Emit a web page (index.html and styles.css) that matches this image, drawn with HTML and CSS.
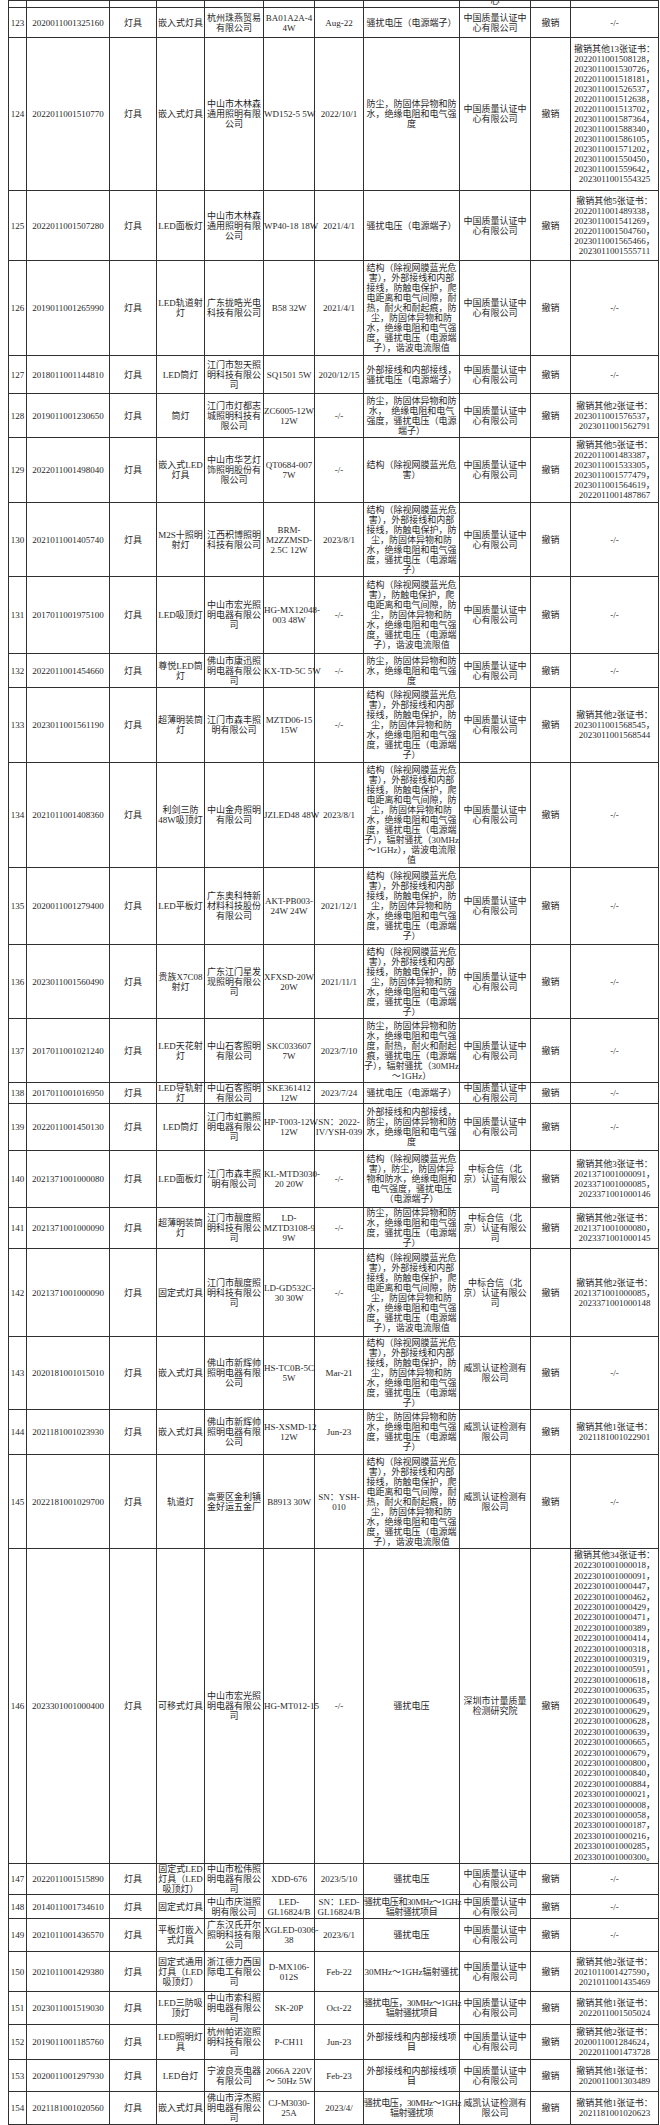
FILE: index.html
```
<!DOCTYPE html>
<html lang="zh">
<head>
<meta charset="utf-8">
<title>撤销证书列表</title>
<link rel="stylesheet" href="styles.css">
</head>
<body>
<table class="grid">
<colgroup>
<col class="c-no"><col class="c-cert"><col class="c-cat"><col class="c-prod"><col class="c-co"><col class="c-model"><col class="c-date"><col class="c-reason"><col class="c-body"><col class="c-act"><col class="c-note">
</colgroup>
<tbody>
<tr class="h7"><td></td><td></td><td></td><td></td><td></td><td></td><td></td><td></td><td><div class="cut"><span>心</span></div></td><td></td><td></td></tr>

<tr class="h30"><td>123</td><td>2020011001325160</td><td>灯具</td><td>嵌入式灯具</td><td>杭州珠燕贸易<br>有限公司</td><td>BA01A2A-4<br>4W</td><td>Aug-22</td><td>骚扰电压（电源端子）</td><td>中国质量认证中<br>心有限公司</td><td>撤销</td><td>-/-</td></tr>

<tr class="h153"><td>124</td><td>2022011001510770</td><td>灯具</td><td>嵌入式灯具</td><td>中山市木林森<br>通用照明有限<br>公司</td><td>WD152-5 5W</td><td>2022/10/1</td><td>防尘，防固体异物和防<br>水，绝缘电阻和电气强<br>度</td><td>中国质量认证中<br>心有限公司</td><td>撤销</td><td>撤销其他13张证书：<br>2022011001508128，<br>2023011001530726，<br>2022011001518181，<br>2023011001526537，<br>2022011001512638，<br>2022011001513702，<br>2023011001587364，<br>2023011001588340，<br>2023011001586105，<br>2023011001571202，<br>2023011001550450，<br>2023011001559642，<br>2023011001554325</td></tr>

<tr class="h70"><td>125</td><td>2022011001507280</td><td>灯具</td><td>LED面板灯</td><td>中山市木林森<br>通用照明有限<br>公司</td><td>WP40-18 18W</td><td>2021/4/1</td><td>骚扰电压（电源端子）</td><td>中国质量认证中<br>心有限公司</td><td>撤销</td><td>撤销其他5张证书：<br>2022011001489338，<br>2023011001541269，<br>2022011001504760，<br>2023011001565466，<br>2023011001555711</td></tr>

<tr class="h95"><td>126</td><td>2019011001265990</td><td>灯具</td><td>LED轨道射<br>灯</td><td>广东拢晧光电<br>科技有限公司</td><td>B58 32W</td><td>2021/4/1</td><td>结构（除视网膜蓝光危<br>害），外部接线和内部<br>接线，防触电保护，爬<br>电距离和电气间隙，耐<br>热，耐火和耐起痕，防<br>尘，防固体异物和防<br>水，绝缘电阻和电气强<br>度，骚扰电压（电源端<br>子），谐波电流限值</td><td>中国质量认证中<br>心有限公司</td><td>撤销</td><td>-/-</td></tr>

<tr class="h38"><td>127</td><td>2018011001144810</td><td>灯具</td><td>LED筒灯</td><td>江门市恕天照<br>明科技有限公<br>司</td><td>SQ1501 5W</td><td>2020/12/15</td><td>外部接线和内部接线，<br>骚扰电压（电源端子）</td><td>中国质量认证中<br>心有限公司</td><td>撤销</td><td>-/-</td></tr>

<tr class="h44"><td>128</td><td>2019011001230650</td><td>灯具</td><td>筒灯</td><td>江门市灯都志<br>城照明科技有<br>限公司</td><td>ZC6005-12W<br>12W</td><td>-/-</td><td>防尘，防固体异物和防<br>水，　绝缘电阻和电气<br>强度，骚扰电压（电源<br>端子）</td><td>中国质量认证中<br>心有限公司</td><td>撤销</td><td>撤销其他2张证书：<br>2023011001576537，<br>2023011001562791</td></tr>

<tr class="h65"><td>129</td><td>2022011001498040</td><td>灯具</td><td>嵌入式LED<br>灯具</td><td>中山市华艺灯<br>饰照明股份有<br>限公司</td><td>QT0684-007<br>7W</td><td>-/-</td><td>结构（除视网膜蓝光危<br>害）</td><td>中国质量认证中<br>心有限公司</td><td>撤销</td><td>撤销其他5张证书：<br>2022011001483387，<br>2023011001533305，<br>2023011001577479，<br>2023011001564619，<br>2022011001487867</td></tr>

<tr class="h74"><td>130</td><td>2021011001405740</td><td>灯具</td><td>M2S十照明<br>射灯</td><td>江西积博照明<br>科技有限公司</td><td>BRM-<br>M2ZZMSD-<br>2.5C 12W</td><td>2023/8/1</td><td>结构（除视网膜蓝光危<br>害），外部接线和内部<br>接线，防触电保护，防<br>尘，防固体异物和防<br>水，绝缘电阻和电气强<br>度，骚扰电压（电源端<br>子）</td><td>中国质量认证中<br>心有限公司</td><td>撤销</td><td>-/-</td></tr>

<tr class="h77"><td>131</td><td>2017011001975100</td><td>灯具</td><td>LED吸顶灯</td><td>中山市宏光照<br>明电器有限公<br>司</td><td>HG-MX12048-<br>003 48W</td><td>-/-</td><td>结构（除视网膜蓝光危<br>害），防触电保护，爬<br>电距离和电气间隙，防<br>尘，防固体异物和防<br>水，绝缘电阻和电气强<br>度，骚扰电压（电源端<br>子），谐波电流限值</td><td>中国质量认证中<br>心有限公司</td><td>撤销</td><td>-/-</td></tr>

<tr class="h34"><td>132</td><td>2022011001454660</td><td>灯具</td><td>尊悦LED筒<br>灯</td><td>佛山市康迅照<br>明电器有限公<br>司</td><td>KX-TD-5C 5W</td><td>-/-</td><td>防尘，防固体异物和防<br>水，绝缘电阻和电气强<br>度</td><td>中国质量认证中<br>心有限公司</td><td>撤销</td><td>-/-</td></tr>

<tr class="h75"><td>133</td><td>2023011001561190</td><td>灯具</td><td>超薄明装筒<br>灯</td><td>江门市森丰照<br>明有限公司</td><td>MZTD06-15<br>15W</td><td>-/-</td><td>结构（除视网膜蓝光危<br>害），外部接线和内部<br>接线，防触电保护，防<br>尘，防固体异物和防<br>水，绝缘电阻和电气强<br>度，骚扰电压（电源端<br>子）</td><td>中国质量认证中<br>心有限公司</td><td>撤销</td><td>撤销其他2张证书：<br>2023011001568545，<br>2023011001568544</td></tr>

<tr class="h105"><td>134</td><td>2021011001408360</td><td>灯具</td><td>利剑三防<br>48W吸顶灯</td><td>中山金舟照明<br>有限公司</td><td>JZLED48 48W</td><td>2023/8/1</td><td>结构（除视网膜蓝光危<br>害），外部接线和内部<br>接线，防触电保护，爬<br>电距离和电气间隙，防<br>尘，防固体异物和防<br>水，绝缘电阻和电气强<br>度，骚扰电压（电源端<br>子），辐射骚扰（30MHz<br>～1GHz），谐波电流限<br>值</td><td>中国质量认证中<br>心有限公司</td><td>撤销</td><td>-/-</td></tr>

<tr class="h77"><td>135</td><td>2020011001279400</td><td>灯具</td><td>LED平板灯</td><td>广东奥科特新<br>材料科技股份<br>有限公司</td><td>AKT-PB003-<br>24W 24W</td><td>2021/12/1</td><td>结构（除视网膜蓝光危<br>害），外部接线和内部<br>接线，防触电保护，防<br>尘，防固体异物和防<br>水，绝缘电阻和电气强<br>度，骚扰电压（电源端<br>子）</td><td>中国质量认证中<br>心有限公司</td><td>撤销</td><td>-/-</td></tr>

<tr class="h74"><td>136</td><td>2023011001560490</td><td>灯具</td><td>贵族X7C08<br>射灯</td><td>广东江门星发<br>现照明有限公<br>司</td><td>XFXSD-20W<br>20W</td><td>2021/11/1</td><td>结构（除视网膜蓝光危<br>害），外部接线和内部<br>接线，防触电保护，防<br>尘，防固体异物和防<br>水，绝缘电阻和电气强<br>度，骚扰电压（电源端<br>子）</td><td>中国质量认证中<br>心有限公司</td><td>撤销</td><td>-/-</td></tr>

<tr class="h64"><td>137</td><td>2017011001021240</td><td>灯具</td><td>LED天花射<br>灯</td><td>中山石客照明<br>有限公司</td><td>SKC033607<br>7W</td><td>2023/7/10</td><td>防尘，防固体异物和防<br>水，绝缘电阻和电气强<br>度，耐热，耐火和耐起<br>痕，骚扰电压（电源端<br>子），辐射骚扰（30MHz<br>～1GHz）</td><td>中国质量认证中<br>心有限公司</td><td>撤销</td><td>-/-</td></tr>

<tr class="h21"><td>138</td><td>2017011001016950</td><td>灯具</td><td>LED导轨射<br>灯</td><td>中山石客照明<br>有限公司</td><td>SKE361412<br>12W</td><td>2023/7/24</td><td>骚扰电压（电源端子）</td><td>中国质量认证中<br>心有限公司</td><td>撤销</td><td>-/-</td></tr>

<tr class="h47"><td>139</td><td>2022011001450130</td><td>灯具</td><td>LED筒灯</td><td>江门市虹鹏照<br>明电器有限公<br>司</td><td>HP-T003-12W<br>12W</td><td>SN：2022-<br>IV/YSH-039</td><td>外部接线和内部接线，<br>防尘，防固体异物和防<br>水，绝缘电阻和电气强<br>度</td><td>中国质量认证中<br>心有限公司</td><td>撤销</td><td>-/-</td></tr>

<tr class="h57"><td>140</td><td>2021371001000080</td><td>灯具</td><td>LED面板灯</td><td>江门市森丰照<br>明有限公司</td><td>KL-MTD3030-<br>20 20W</td><td>-/-</td><td>结构（除视网膜蓝光危<br>害），防尘，防固体异<br>物和防水，绝缘电阻和<br>电气强度，骚扰电压<br>（电源端子）</td><td>中标合信（北<br>京）认证有限公<br>司</td><td>撤销</td><td>撤销其他3张证书：<br>2021371001000091，<br>2023371001000085，<br>2023371001000146</td></tr>

<tr class="h40"><td>141</td><td>2021371001000090</td><td>灯具</td><td>超薄明装筒<br>灯</td><td>江门市靓度照<br>明科技有限公<br>司</td><td>LD-<br>MZTD3108-9<br>9W</td><td>-/-</td><td>防尘，防固体异物和防<br>水，绝缘电阻和电气强<br>度，骚扰电压（电源端<br>子）</td><td>中标合信（北<br>京）认证有限公<br>司</td><td>撤销</td><td>撤销其他2张证书：<br>2021371001000080，<br>2023371001000145</td></tr>

<tr class="h88"><td>142</td><td>2021371001000090</td><td>灯具</td><td>固定式灯具</td><td>江门市靓度照<br>明科技有限公<br>司</td><td>LD-GD532C-<br>30 30W</td><td>-/-</td><td>结构（除视网膜蓝光危<br>害），外部接线和内部<br>接线，防触电保护，爬<br>电距离和电气间隙，防<br>尘，防固体异物和防<br>水，绝缘电阻和电气强<br>度，骚扰电压（电源端<br>子），谐波电流限值</td><td>中标合信（北<br>京）认证有限公<br>司</td><td>撤销</td><td>撤销其他2张证书：<br>2021371001000085，<br>2023371001000148</td></tr>

<tr class="h73"><td>143</td><td>2020181001015010</td><td>灯具</td><td>嵌入式灯具</td><td>佛山市新辉帅<br>照明电器有限<br>公司</td><td>HS-TC0B-5C<br>5W</td><td>Mar-21</td><td>结构（除视网膜蓝光危<br>害），外部接线和内部<br>接线，防触电保护，防<br>尘，防固体异物和防<br>水，绝缘电阻和电气强<br>度，骚扰电压（电源端<br>子）</td><td>威凯认证检测有<br>限公司</td><td>撤销</td><td>-/-</td></tr>

<tr class="h45"><td>144</td><td>2021181001023930</td><td>灯具</td><td>嵌入式灯具</td><td>佛山市新辉帅<br>照明电器有限<br>公司</td><td>HS-XSMD-12<br>12W</td><td>Jun-23</td><td>防尘，防固体异物和防<br>水，绝缘电阻和电气强<br>度，骚扰电压（电源端<br>子）</td><td>威凯认证检测有<br>限公司</td><td>撤销</td><td>撤销其他1张证书：<br>2021181001022901</td></tr>

<tr class="h94"><td>145</td><td>2022181001029700</td><td>灯具</td><td>轨道灯</td><td>高要区金利镇<br>金好运五金厂</td><td>B8913 30W</td><td>SN：YSH-<br>010</td><td>结构（除视网膜蓝光危<br>害），外部接线和内部<br>接线，防触电保护，爬<br>电距离和电气间隙，耐<br>热，耐火和耐起痕，防<br>尘，防固体异物和防<br>水，绝缘电阻和电气强<br>度，骚扰电压（电源端<br>子），谐波电流限值</td><td>威凯认证检测有<br>限公司</td><td>撤销</td><td>-/-</td></tr>

<tr class="h315"><td>146</td><td>2023301001000400</td><td>灯具</td><td>可移式灯具</td><td>中山市宏光照<br>明电器有限公<br>司</td><td>HG-MT012-15</td><td>-/-</td><td>骚扰电压</td><td>深圳市计量质量<br>检测研究院</td><td>撤销</td><td class="long">撤销其他34张证书：<br>2022301001000018，<br>2022301001000091，<br>2022301001000447，<br>2022301001000462，<br>2022301001000429，<br>2022301001000471，<br>2022301001000389，<br>2022301001000414，<br>2022301001000318，<br>2022301001000319，<br>2022301001000591，<br>2022301001000618，<br>2022301001000635，<br>2022301001000649，<br>2022301001000629，<br>2022301001000628，<br>2022301001000639，<br>2022301001000665，<br>2022301001000679，<br>2022301001000800，<br>2022301001000840，<br>2022301001000884，<br>2023301001000021，<br>2023301001000008，<br>2023301001000058，<br>2023301001000187，<br>2023301001000216，<br>2023301001000285，<br>2023301001000300。</td></tr>

<tr class="h31"><td>147</td><td>2022011001515890</td><td>灯具</td><td>固定式LED<br>灯具（LED<br>吸顶灯）</td><td>中山市松伟照<br>明电器有限公<br>司</td><td>XDD-676</td><td>2023/5/10</td><td>骚扰电压</td><td>中国质量认证中<br>心有限公司</td><td>撤销</td><td>-/-</td></tr>

<tr class="h24"><td>148</td><td>2014011001734610</td><td>灯具</td><td>固定式灯具</td><td>中山市庆溢照<br>明有限公司</td><td>LED-<br>GL16824/B</td><td>SN：LED-<br>GL16824/B</td><td class="tight">骚扰电压和30MHz～1GHz<br>辐射骚扰项目</td><td>中国质量认证中<br>心有限公司</td><td>撤销</td><td>-/-</td></tr>

<tr class="h33"><td>149</td><td>2021011001436570</td><td>灯具</td><td>平板灯嵌入<br>式灯具</td><td>广东汉氏开尔<br>照明科技有限<br>公司</td><td>XGLED-0306-<br>38</td><td>2023/6/1</td><td>骚扰电压</td><td>中国质量认证中<br>心有限公司</td><td>撤销</td><td>-/-</td></tr>

<tr class="h40"><td>150</td><td>2021011001429380</td><td>灯具</td><td>固定式通用<br>灯具（LED<br>吸顶灯）</td><td>浙江德力西国<br>际电工有限公<br>司</td><td>D-MX106-<br>012S</td><td>Feb-22</td><td>30MHz～1GHz辐射骚扰</td><td>中国质量认证中<br>心有限公司</td><td>撤销</td><td>撤销其他2张证书：<br>2021011001427590，<br>2021011001435469</td></tr>

<tr class="h33"><td>151</td><td>2023011001519030</td><td>灯具</td><td>LED三防吸<br>顶灯</td><td>中山市索科照<br>明电器有限公<br>司</td><td>SK-20P</td><td>Oct-22</td><td class="tight">骚扰电压，30MHz～1GHz<br>辐射骚扰项目</td><td>中国质量认证中<br>心有限公司</td><td>撤销</td><td>撤销其他1张证书：<br>2022011001505024</td></tr>

<tr class="h35"><td>152</td><td>2019011001185760</td><td>灯具</td><td>LED照明灯<br>具</td><td>杭州帕诺迩照<br>明科技有限公<br>司</td><td>P-CH11</td><td>Jun-23</td><td>外部接线和内部接线项<br>目</td><td>中国质量认证中<br>心有限公司</td><td>撤销</td><td>撤销其他2张证书：<br>2020011001284624，<br>2022011001473728</td></tr>

<tr class="h32"><td>153</td><td>2020011001297930</td><td>灯具</td><td>LED台灯</td><td>宁波良亮电器<br>有限公司</td><td>2066A 220V<br>～ 50Hz 5W</td><td>Feb-23</td><td>外部接线和内部接线项<br>目</td><td>中国质量认证中<br>心有限公司</td><td>撤销</td><td>撤销其他1张证书：<br>2020011001303489</td></tr>

<tr class="h33"><td>154</td><td>2021181001020560</td><td>灯具</td><td>嵌入式灯具</td><td>佛山市淳杰照<br>明电器有限公<br>司</td><td>CJ-M3030-<br>25A</td><td>2023/4/</td><td class="tight">骚扰电压，30MHz～1GHz<br>辐射骚扰项</td><td>威凯认证检测有<br>限公司</td><td>撤销</td><td>撤销其他1张证书：<br>2021181001020623</td></tr>

<tr class="h7"><td></td><td></td><td></td><td></td><td></td><td></td><td></td><td></td><td></td><td></td><td></td></tr>
</tbody>
</table>
</body>
</html>
```
FILE: styles.css
```
html, body {
  margin: 0;
  padding: 0;
  background: #ffffff;
}

.grid {
  margin-left: 8px;
  width: 650px;
  border-collapse: collapse;
  table-layout: fixed;
  font-family: "Liberation Serif", "Noto Sans CJK SC", serif;
  font-size: 9px;
  line-height: 10px;
  color: #1f1f1f;
}

.grid td {
  border: 1px solid #303030;
  padding: 0;
  text-align: center;
  vertical-align: middle;
  white-space: nowrap;
  overflow: visible;
}

.c-no { width: 18px; }
.c-cert { width: 83px; }
.c-cat { width: 47px; }
.c-prod { width: 48px; }
.c-co { width: 59px; }
.c-model { width: 51px; }
.c-date { width: 49px; }
.c-reason { width: 96px; }
.c-body { width: 71px; }
.c-act { width: 40px; }
.c-note { width: 88px; }

.grid td.long { line-height: 10.4px; }
.grid td.tight { letter-spacing: -0.4px; }

.cut {
  height: 6px;
  overflow: hidden;
}
.cut span {
  display: block;
  margin-top: -5px;
}

.h7 { height: 7px; }
.h21 { height: 21px; }
.h24 { height: 24px; }
.h30 { height: 30px; }
.h31 { height: 31px; }
.h32 { height: 32px; }
.h33 { height: 33px; }
.h34 { height: 34px; }
.h35 { height: 35px; }
.h38 { height: 38px; }
.h40 { height: 40px; }
.h44 { height: 44px; }
.h45 { height: 45px; }
.h47 { height: 47px; }
.h57 { height: 57px; }
.h64 { height: 64px; }
.h65 { height: 65px; }
.h70 { height: 70px; }
.h73 { height: 73px; }
.h74 { height: 74px; }
.h75 { height: 75px; }
.h77 { height: 77px; }
.h88 { height: 88px; }
.h94 { height: 94px; }
.h95 { height: 95px; }
.h105 { height: 105px; }
.h153 { height: 153px; }
.h315 { height: 315px; }
```
